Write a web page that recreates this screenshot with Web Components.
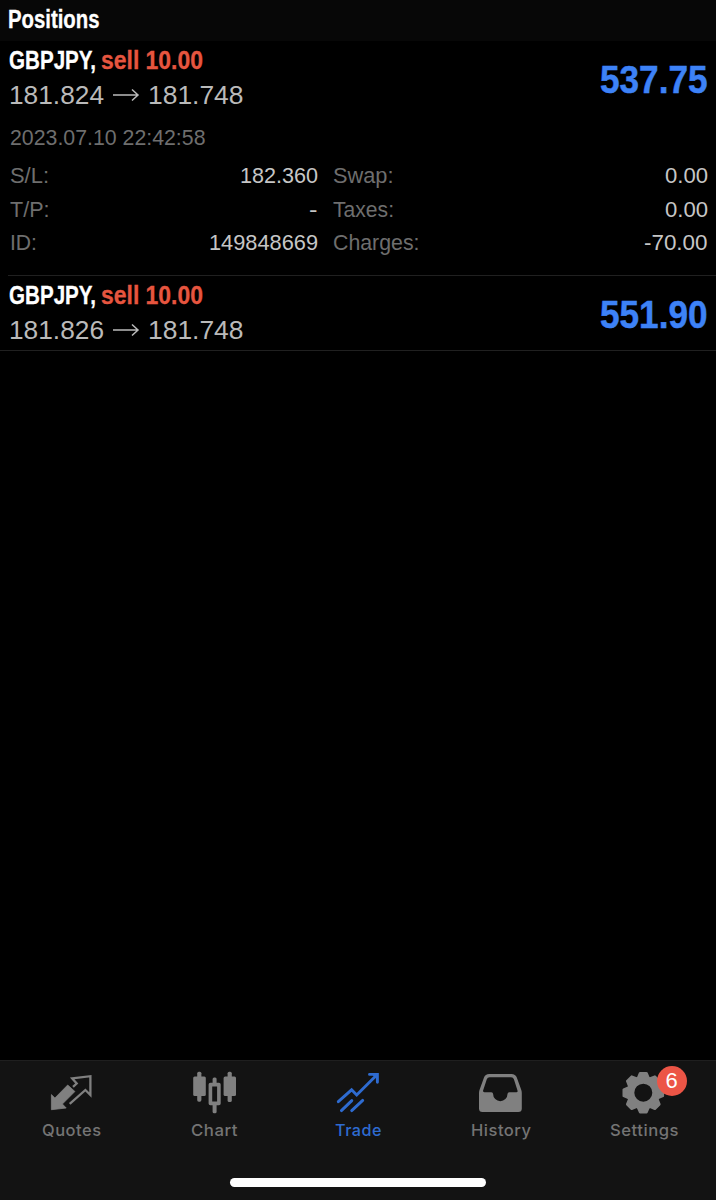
<!DOCTYPE html>
<html lang="en">
<head>
<meta charset="utf-8">
<title>Trade</title>
<style>
  html, body { margin: 0; height: 100%; background: #000; overflow: hidden; }
</style>
</head>
<body>
<trade-app></trade-app>
<script>
// Text run squeezed to a given advance width.
class FitText extends HTMLElement {
  constructor() {
    super();
    this.attachShadow({ mode: 'open' }).innerHTML =
      `<style>:host{display:block;white-space:nowrap}span{display:inline-block;transform-origin:0 50%}</style><span><slot></slot></span>`;
  }
  connectedCallback() {
    const w = Number(this.getAttribute('w'));
    const s = this.shadowRoot.querySelector('span');
    this.style.width = w + 'px';
    s.style.transform = `scaleX(${w / s.getBoundingClientRect().width})`;
  }
}

class PositionRow extends HTMLElement {
  connectedCallback() {
    const a = n => this.getAttribute(n);
    this.attachShadow({ mode: 'open' }).innerHTML = `
    <style>
      :host { display: block; }
      .head { display: flex; justify-content: space-between; height: 70px; padding: 2px 8.5px 0 8.5px; }
      .title { display: flex; gap: 5px; font: bold 26px/35px "Liberation Sans", sans-serif; color: #fff; -webkit-text-stroke: .3px currentColor; }
      .side { color: #e6553f; }
      .prices { display: flex; align-items: center; font: 26px/35px "Liberation Sans", sans-serif; color: #bababa; }
      svg { width: 28px; height: 14px; margin: 0 8px 2px 8px; }
      .amount { font: bold 39.5px/73px "Liberation Sans", sans-serif; color: #3d82f7; -webkit-text-stroke: .5px currentColor; }
    </style>
    <div class="head">
      <div>
        <div class="title"><fit-text w="87">${a('symbol')},</fit-text><fit-text class="side" w="102">${a('side')}</fit-text></div>
        <div class="prices"><fit-text w="95">${a('open')}</fit-text><svg viewBox="0 0 28 14" fill="none" stroke="#bababa" stroke-width="1.5"><path d="M1 7H25.5M20 1.5L26 7L20 12.5"/></svg><fit-text w="95.5">${a('current')}</fit-text></div>
      </div>
      <fit-text class="amount" w="107.5">${a('profit')}</fit-text>
    </div>
    <slot></slot>`;
  }
}

class PositionDetails extends HTMLElement {
  connectedCallback() {
    this.attachShadow({ mode: 'open' }).innerHTML = `
    <style>
      :host { display: block; padding: 9px 8.5px 14.5px 9.5px; font: 21.5px/33.5px "Liberation Sans", sans-serif; color: #6e6e6e; }
      .date { line-height: 33px; margin-bottom: 5px; }
      .grid { display: grid; grid-template-columns: 308px 374.5px; column-gap: 15.5px; }
      .cell { display: flex; justify-content: space-between; height: 33.5px; }
      .v { color: #c6c6c6; }
    </style>
    <fit-text class="date" w="195.5">2023.07.10 22:42:58</fit-text>
    <div class="grid">
      <div class="cell"><fit-text w="39">S/L:</fit-text><fit-text class="v" w="78">182.360</fit-text></div>
      <div class="cell"><fit-text w="60.5">Swap:</fit-text><fit-text class="v" w="43">0.00</fit-text></div>
      <div class="cell"><fit-text w="39.5">T/P:</fit-text><fit-text class="v" w="8.5">-</fit-text></div>
      <div class="cell"><fit-text w="61">Taxes:</fit-text><fit-text class="v" w="43">0.00</fit-text></div>
      <div class="cell"><fit-text w="27">ID:</fit-text><fit-text class="v" w="109">149848669</fit-text></div>
      <div class="cell"><fit-text w="86.5">Charges:</fit-text><fit-text class="v" w="63.5">-70.00</fit-text></div>
    </div>`;
  }
}

const tooth = [0, 45, 90, 135, 180, 225, 270, 315].map(r =>
  `<path transform="rotate(${r})" d="M-5.2 -15L-3.2 -19.6H3.2L5.2 -15Z"/>`).join('');
const ICONS = {
  quotes: `<svg viewBox="41.6 1066 60 50"><path fill="currentColor" stroke="currentColor" stroke-width=".8" stroke-linejoin="round" d="M51 1109.7V1094.6L54.5 1098L67.3 1085L74.5 1091.5L62 1104L65.8 1108Z"/><path fill="none" stroke="currentColor" stroke-width="2.3" d="M72.6 1086.8L76.3 1083.5L71.8 1078.4L90 1076.2V1095L85 1090L69.3 1103.8"/></svg>`,
  chart: `<svg viewBox="184.8 1066 60 50" fill="currentColor"><rect x="193" y="1076.5" width="12.6" height="19.5" rx="1.5"/><rect x="197" y="1071.7" width="4.2" height="30" rx="1.6"/><rect x="223.4" y="1076.5" width="12.4" height="19.5" rx="1.5"/><rect x="227.4" y="1071.7" width="4.2" height="30.3" rx="1.6"/><rect x="212.4" y="1077.5" width="4" height="7" rx="1.5"/><rect x="212.4" y="1103" width="4" height="10.2" rx="1.5"/><rect x="210.2" y="1084.6" width="8.5" height="18.8" fill="none" stroke="currentColor" stroke-width="3.6" stroke-linejoin="round"/></svg>`,
  trade: `<svg viewBox="328 1066 60 50" fill="none" stroke="currentColor" stroke-width="2.9" stroke-linecap="round"><path d="M338.3 1101.7L351.6 1089.8L356.7 1095L377 1074.8M369.5 1074.4H377.4V1082.3M341.4 1110.6L351.8 1100.6M351.7 1110.6L362.7 1100.4" stroke-linejoin="miter"/><path fill="currentColor" stroke="none" d="M372 1074.5H377.5V1080Z"/></svg>`,
  history: `<svg viewBox="471.2 1066 60 50"><path fill="currentColor" fill-rule="evenodd" d="M489.5 1074H511.5Q515.8 1074 517 1077.5L521.5 1090Q522 1091.3 522 1093V1108.5Q522 1112 518.5 1112H482.7Q479.2 1112 479.2 1108.5V1093Q479.2 1091.3 479.7 1090L484.2 1077.5Q485.4 1074 489.5 1074ZM489.8 1077.2Q487.7 1077.2 487 1079.2L483.3 1090.5Q482.9 1092.2 484.5 1092.2H491.5Q493.2 1092.2 493.3 1094A7.2 7.2 0 0 0 507.7 1094Q507.8 1092.2 509.5 1092.2H516.6Q518.2 1092.2 517.7 1090.5L514.1 1079.2Q513.4 1077.2 511.3 1077.2Z"/></svg>`,
  settings: `<svg viewBox="614.4 1066 60 50"><g transform="translate(643.7 1092.7)" fill="currentColor" stroke="currentColor" stroke-linejoin="round"><circle r="12.8" fill="none" stroke-width="7.6"/><g stroke-width="2.4">${tooth}</g></g></svg>`
};

class TabItem extends HTMLElement {
  connectedCallback() {
    this.attachShadow({ mode: 'open' }).innerHTML = `
    <style>
      :host { display: flex; flex: 1; flex-direction: column; align-items: center; position: relative; padding-top: 5px; color: #808080; }
      :host([active]) { color: #2e6bd0; }
      svg { width: 60px; height: 50px; display: block; }
      .label { font: 450 16.5px/24px Inter, sans-serif; letter-spacing: .5px; color: #747474; margin-top: 2px; }
      :host([active]) .label { color: #2e6bd0; }
      .badge { position: absolute; left: calc(50% + 12.3px); top: 5px; width: 30px; height: 30px; border-radius: 50%; background: #ec5546; color: #fff; text-align: center; font: 22px/30px "Liberation Sans", sans-serif; }
    </style>
    ${ICONS[this.getAttribute('icon')]}
    <fit-text class="label" w="${this.getAttribute('w')}"><slot></slot></fit-text>
    ${this.hasAttribute('badge') ? `<div class="badge">${this.getAttribute('badge')}</div>` : ''}`;
  }
}

class TradeApp extends HTMLElement {
  connectedCallback() {
    this.attachShadow({ mode: 'open' }).innerHTML = `
    <style>
      :host { display: flex; flex-direction: column; width: 716px; height: 1200px; background: #000; }
      header { height: 41px; box-sizing: border-box; padding-left: 7.5px; background: #070707; color: #fff; font: bold 25px/39.5px "Liberation Sans", sans-serif; -webkit-text-stroke: .3px currentColor; }
      main { flex: 1; }
      .line { height: 1px; background: #202020; margin-left: 8px; }
      .line.full { margin: 2px 0 0; }
      nav { height: 140px; box-sizing: border-box; border-top: 1px solid #1f1f1f; background: #131313; display: flex; flex-direction: column; }
      .tabs { display: flex; flex: 1; }
      .home { width: 256px; height: 9px; border-radius: 5px; background: #fff; align-self: center; margin-bottom: 13px; }
    </style>
    <header><fit-text w="91.5">Positions</fit-text></header>
    <main>
      <position-row symbol="GBPJPY" side="sell 10.00" open="181.824" current="181.748" profit="537.75"><position-details></position-details></position-row>
      <div class="line"></div>
      <position-row symbol="GBPJPY" side="sell 10.00" open="181.826" current="181.748" profit="551.90"></position-row>
      <div class="line full"></div>
    </main>
    <nav>
      <div class="tabs">
        <tab-item icon="quotes" w="59.5">Quotes</tab-item>
        <tab-item icon="chart" w="47">Chart</tab-item>
        <tab-item icon="trade" w="47" active>Trade</tab-item>
        <tab-item icon="history" w="60.5">History</tab-item>
        <tab-item icon="settings" w="69" badge="6">Settings</tab-item>
      </div>
      <div class="home"></div>
    </nav>`;
  }
}
customElements.define('fit-text', FitText);
customElements.define('position-details', PositionDetails);
customElements.define('position-row', PositionRow);
customElements.define('tab-item', TabItem);
customElements.define('trade-app', TradeApp);
</script>
</body>
</html>
